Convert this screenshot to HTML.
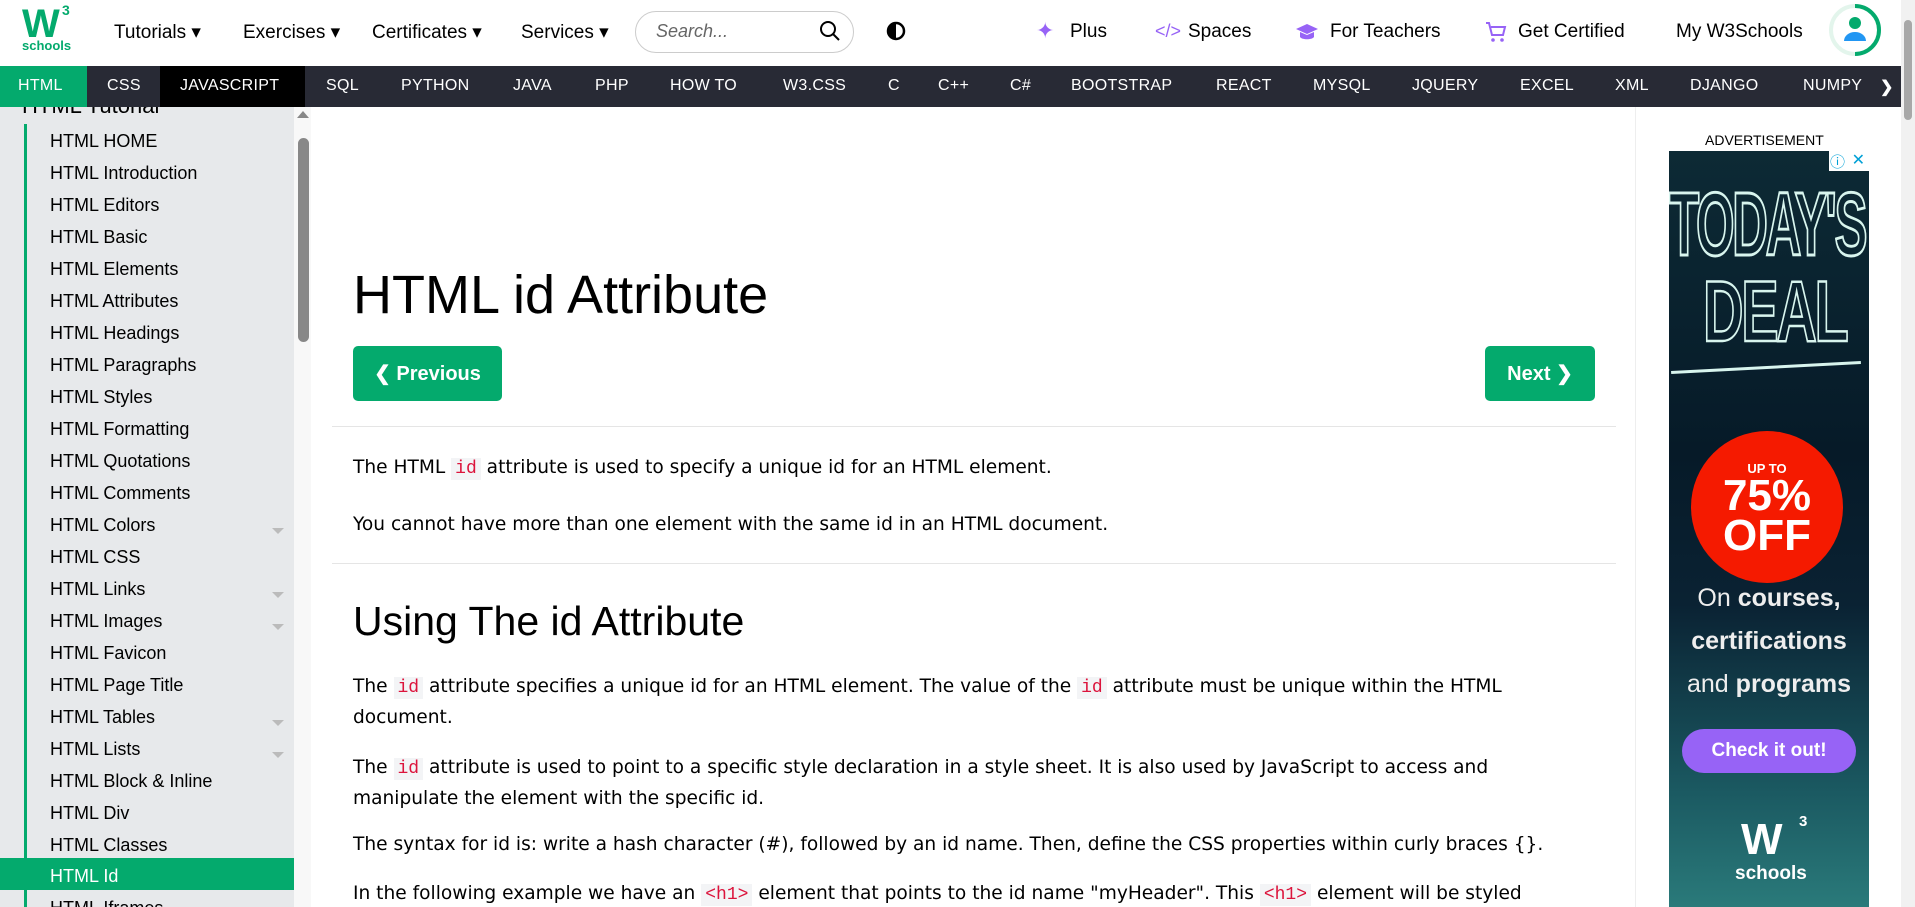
<!DOCTYPE html>
<html><head><meta charset="utf-8"><style>
*{margin:0;padding:0;box-sizing:border-box}
body{width:1915px;height:907px;overflow:hidden;position:relative;background:#fff;font-family:"Liberation Sans",sans-serif;color:#000}
.a{position:absolute;white-space:nowrap}
#top{position:absolute;left:0;top:0;width:1901px;height:66px;background:#fff}
.tl{position:absolute;top:21px;font-size:19px;color:#000}
#nav{position:absolute;left:0;top:66px;width:1901px;height:41px;background:#282a35}
.n{position:absolute;top:11px;font-size:16px;color:#fff;letter-spacing:.3px}
#side{position:absolute;left:0;top:107px;width:294px;height:800px;background:#e7e9eb;overflow:hidden}
.si{position:absolute;left:50px;font-size:18px;color:#000}
.car{position:absolute;left:272px;width:0;height:0;border-left:6px solid transparent;border-right:6px solid transparent;border-top:6px solid #bbb}
.p{position:absolute;left:353px;font-family:"DejaVu Sans",sans-serif;font-size:18.6px;color:#000;white-space:nowrap}
code{font-family:"Liberation Mono",monospace;color:#dc143c;background:#f3f4f6;padding:1px 4px;font-size:18px}
.btn{position:absolute;background:#04aa6d;color:#fff;font-size:20px;font-weight:bold;border-radius:5px;display:flex;align-items:center;justify-content:center}
</style></head><body>
<div id="top">
 <div class="a" style="left:22px;top:4px;font-size:40px;font-weight:900;color:#04aa6d;letter-spacing:-3px;line-height:40px">W</div>
 <div class="a" style="left:62px;top:2px;font-size:14px;font-weight:bold;color:#04aa6d">3</div>
 <div class="a" style="left:22px;top:38px;font-size:13px;font-weight:bold;color:#04aa6d">schools</div>
 <div class="tl" style="left:114px">Tutorials ▾</div>
 <div class="tl" style="left:243px">Exercises ▾</div>
 <div class="tl" style="left:372px">Certificates ▾</div>
 <div class="tl" style="left:521px">Services ▾</div>
 <div class="a" style="left:635px;top:11px;width:219px;height:42px;border:1px solid #ccc;border-radius:21px"></div>
 <div class="a" style="left:656px;top:21px;font-size:18px;font-style:italic;color:#666">Search...</div>
 <svg class="a" style="left:818px;top:19px" width="24" height="24" viewBox="0 0 24 24"><circle cx="10" cy="10" r="7" fill="none" stroke="#000" stroke-width="2"/><path d="M15 15l6 6" stroke="#000" stroke-width="2"/></svg>
 <svg class="a" style="left:886px;top:21px" width="20" height="20" viewBox="0 0 20 20"><circle cx="10" cy="10" r="8" fill="none" stroke="#000" stroke-width="2.5"/><path d="M10 2a8 8 0 0 0 0 16z" fill="#000"/></svg>
 <div class="a" style="left:1036px;top:18px;color:#9763f6;font-size:22px">✦</div>
 <div class="tl" style="left:1070px">Plus</div>
 <div class="a" style="left:1155px;top:21px;color:#9763f6;font-size:18px">&lt;/&gt;</div>
 <div class="tl" style="left:1188px">Spaces</div>
 <svg class="a" style="left:1295px;top:21px" width="24" height="22" viewBox="0 0 24 22"><path d="M1 8l11-5 11 5-11 5z" fill="#9763f6"/><path d="M5 11v5c2 3 12 3 14 0v-5l-7 3z" fill="#9763f6"/></svg>
 <div class="tl" style="left:1330px">For Teachers</div>
 <svg class="a" style="left:1484px;top:20px" width="24" height="24" viewBox="0 0 24 24"><path d="M2 3h3l3 12h11l2-8H7" fill="none" stroke="#9763f6" stroke-width="2"/><circle cx="9" cy="20" r="1.8" fill="#9763f6"/><circle cx="18" cy="20" r="1.8" fill="#9763f6"/></svg>
 <div class="tl" style="left:1518px">Get Certified</div>
 <div class="tl" style="left:1676px">My W3Schools</div>
 <svg class="a" style="left:1826px;top:3px" width="58" height="54" viewBox="0 0 58 54"><circle cx="29" cy="27" r="24" fill="none" stroke="#e3f5ec" stroke-width="4"/><path d="M29 3a24 24 0 0 1 0 48" fill="none" stroke="#04aa6d" stroke-width="4"/><circle cx="29" cy="20" r="6" fill="#04aa6d"/><path d="M18 38a11 9 0 0 1 22 0z" fill="#2196f3"/></svg>
</div>
<div id="nav">
 <div class="a" style="left:0;top:0;width:87px;height:41px;background:#04aa6d"></div>
 <div class="a" style="left:160px;top:0;width:145px;height:41px;background:#000"></div>
 <div class="n" style="left:18px">HTML</div><div class="n" style="left:107px">CSS</div><div class="n" style="left:180px">JAVASCRIPT</div><div class="n" style="left:326px">SQL</div><div class="n" style="left:401px">PYTHON</div><div class="n" style="left:513px">JAVA</div><div class="n" style="left:595px">PHP</div><div class="n" style="left:670px">HOW TO</div><div class="n" style="left:783px">W3.CSS</div><div class="n" style="left:888px">C</div><div class="n" style="left:938px">C++</div><div class="n" style="left:1010px">C#</div><div class="n" style="left:1071px">BOOTSTRAP</div><div class="n" style="left:1216px">REACT</div><div class="n" style="left:1313px">MYSQL</div><div class="n" style="left:1412px">JQUERY</div><div class="n" style="left:1520px">EXCEL</div><div class="n" style="left:1615px">XML</div><div class="n" style="left:1690px">DJANGO</div><div class="n" style="left:1803px">NUMPY</div>
 <div class="n" style="left:1876px;font-weight:bold;background:#282a35;padding-left:4px">❯</div>
</div>
<div id="side">
 <div class="a" style="left:22px;top:-14px;font-size:22px">HTML Tutorial</div>
 <div class="a" style="left:24px;top:17px;width:3px;height:800px;background:#04aa6d"></div>
 <div class="a" style="left:0;top:751px;width:294px;height:32px;background:#04aa6d"></div>
 <div class="si" style="top:24px">HTML HOME</div>
 <div class="si" style="top:56px">HTML Introduction</div>
 <div class="si" style="top:88px">HTML Editors</div>
 <div class="si" style="top:120px">HTML Basic</div>
 <div class="si" style="top:152px">HTML Elements</div>
 <div class="si" style="top:184px">HTML Attributes</div>
 <div class="si" style="top:216px">HTML Headings</div>
 <div class="si" style="top:248px">HTML Paragraphs</div>
 <div class="si" style="top:280px">HTML Styles</div>
 <div class="si" style="top:312px">HTML Formatting</div>
 <div class="si" style="top:344px">HTML Quotations</div>
 <div class="si" style="top:376px">HTML Comments</div>
 <div class="si" style="top:408px">HTML Colors</div><div class="car" style="top:421px"></div>
 <div class="si" style="top:440px">HTML CSS</div>
 <div class="si" style="top:472px">HTML Links</div><div class="car" style="top:485px"></div>
 <div class="si" style="top:504px">HTML Images</div><div class="car" style="top:517px"></div>
 <div class="si" style="top:536px">HTML Favicon</div>
 <div class="si" style="top:568px">HTML Page Title</div>
 <div class="si" style="top:600px">HTML Tables</div><div class="car" style="top:613px"></div>
 <div class="si" style="top:632px">HTML Lists</div><div class="car" style="top:645px"></div>
 <div class="si" style="top:664px">HTML Block &amp; Inline</div>
 <div class="si" style="top:696px">HTML Div</div>
 <div class="si" style="top:728px">HTML Classes</div>
 <div class="si" style="top:759px;color:#fff">HTML Id</div>
 <div class="si" style="top:791px">HTML Iframes</div>
</div>
<div class="a" style="left:294px;top:107px;width:17px;height:800px;background:#f8f8f8"></div>
<div class="a" style="left:297px;top:111px;width:0;height:0;border-left:6px solid transparent;border-right:6px solid transparent;border-bottom:7px solid #888"></div>
<div class="a" style="left:298px;top:138px;width:11px;height:204px;background:#888;border-radius:6px"></div>

<div class="a" style="left:353px;top:264px;font-size:54px">HTML id Attribute</div>
<div class="btn" style="left:353px;top:346px;width:149px;height:55px">❮ Previous</div>
<div class="btn" style="left:1485px;top:346px;width:110px;height:55px">Next ❯</div>
<div class="a" style="left:332px;top:426px;width:1284px;height:1px;background:#e5e5e5"></div>
<div class="p" style="top:457px">The HTML <code>id</code> attribute is used to specify a unique id for an HTML element.</div>
<div class="p" style="top:514px">You cannot have more than one element with the same id in an HTML document.</div>
<div class="a" style="left:332px;top:563px;width:1284px;height:1px;background:#e5e5e5"></div>
<div class="a" style="left:353px;top:598px;font-size:41px">Using The id Attribute</div>
<div class="p" style="top:672px;line-height:29px">The <code>id</code> attribute specifies a unique id for an HTML element. The value of the <code>id</code> attribute must be unique within the HTML<br>document.</div>
<div class="p" style="top:753px;line-height:29px">The <code>id</code> attribute is used to point to a specific style declaration in a style sheet. It is also used by JavaScript to access and<br>manipulate the element with the specific id.</div>
<div class="p" style="top:834px">The syntax for id is: write a hash character (#), followed by an id name. Then, define the CSS properties within curly braces {}.</div>
<div class="p" style="top:883px">In the following example we have an <code>&lt;h1&gt;</code> element that points to the id name "myHeader". This <code>&lt;h1&gt;</code> element will be styled</div>

<div class="a" style="left:1635px;top:107px;width:1px;height:800px;background:#eee"></div>
<div class="a" style="left:1705px;top:132px;font-size:14px">ADVERTISEMENT</div>
<div class="a" style="left:1669px;top:151px;width:200px;height:756px;overflow:hidden;background:linear-gradient(180deg,#0d2a35 0%,#061a28 40%,#0a2233 60%,#1b5a62 85%,#2a7a7a 100%)">
 <div class="a" style="right:0;top:0;width:40px;height:20px;background:#fff"></div>
 <div class="a" style="right:24px;top:0;font-size:15px;color:#00a0d6">ⓘ</div>
 <div class="a" style="right:4px;top:-1px;font-size:16px;color:#00a0d6">✕</div>
 <div class="a" style="left:0;top:30px;font-size:62px;font-weight:bold;color:transparent;-webkit-text-stroke:2px #d8f5ee;letter-spacing:-3px;transform:scale(.8,1.45);transform-origin:left top;line-height:62px">TODAY'S</div>
 <div class="a" style="left:34px;top:118px;font-size:72px;font-weight:bold;color:transparent;-webkit-text-stroke:2px #d8f5ee;letter-spacing:-3px;transform:scale(.78,1.2);transform-origin:left top;line-height:72px">DEAL</div>
 <div class="a" style="left:2px;top:215px;width:190px;height:3px;background:#d8f5ee;transform:rotate(-3deg)"></div>
 <div class="a" style="left:22px;top:280px;width:152px;height:152px;border-radius:50%;background:#f51a00;color:#fff;text-align:center;font-weight:bold">
  <div style="margin-top:30px;font-size:13px">UP TO</div>
  <div style="font-size:44px;line-height:40px">75%</div>
  <div style="font-size:44px;line-height:40px">OFF</div>
 </div>
 <div class="a" style="left:0;width:200px;top:426px;text-align:center;color:#eee;font-size:25px;line-height:43px">On <b>courses,</b><br><b>certifications</b><br>and <b>programs</b></div>
 <div class="a" style="left:13px;top:578px;width:174px;height:44px;border-radius:22px;background:#9763f6;color:#fff;font-weight:bold;font-size:19px;text-align:center;line-height:44px">Check it out!</div>
 <div class="a" style="left:72px;top:664px;font-size:44px;font-weight:900;color:#fff;letter-spacing:-3px">W</div>
 <div class="a" style="left:130px;top:662px;font-size:15px;font-weight:bold;color:#fff">3</div>
 <div class="a" style="left:66px;top:712px;font-size:19px;font-weight:bold;color:#fff">schools</div>
</div>
<div class="a" style="left:1901px;top:0;width:14px;height:907px;background:#f1f1f1"></div>
<div class="a" style="left:1904px;top:20px;width:8px;height:100px;background:#a8a8a8;border-radius:4px"></div>
</body></html>
